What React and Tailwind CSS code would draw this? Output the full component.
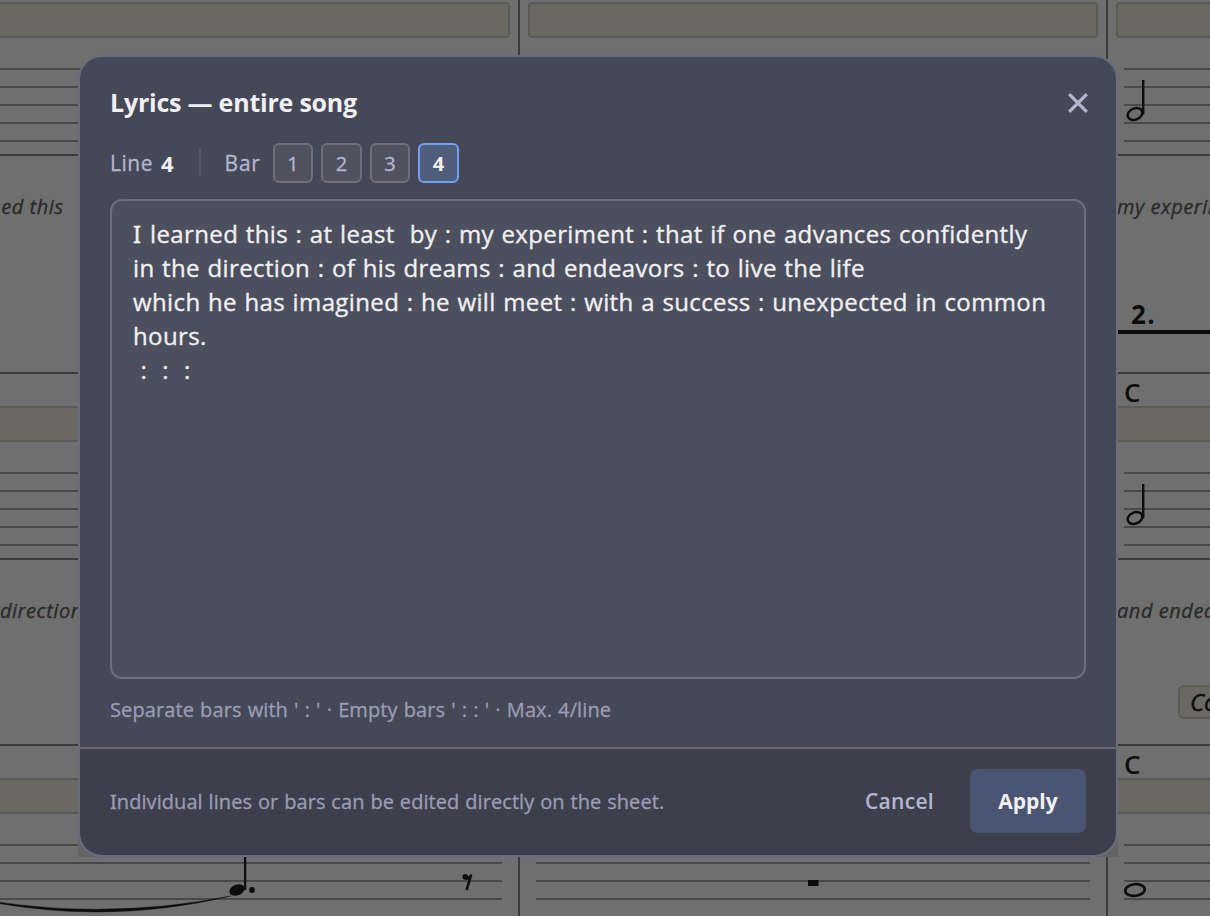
import { useState } from "react";

const systems = [
  {
    chord: "",
    lyrics: ["I learned this", "at least  by", "my experiment"],
    glyphs: [null, null, "half"],
  },
  {
    chord: "C",
    lyrics: ["in the direction", "of his dreams", "and endeavors"],
    glyphs: [null, null, "half"],
  },
  {
    chord: "C",
    lyrics: ["", "", ""],
    glyphs: ["dotted", "rest", "whole"],
  },
];

const song = [
  "I learned this : at least  by : my experiment : that if one advances confidently",
  "in the direction : of his dreams : and endeavors : to live the life",
  "which he has imagined : he will meet : with a success : unexpected in common",
  "hours.",
  " :  :  :",
];

// Note shapes, drawn from the top left corner of the staff
function Glyph({ type }) {
  return (
    <svg className="absolute left-0 top-0 w-full h-full overflow-visible" fill="#0d0d0d">
      {type === "half" && (
        <>
          <ellipse cx="11" cy="46" rx="7.6" ry="5.6" transform="rotate(-22 11 46)" fill="none" stroke="#0d0d0d" strokeWidth="2.5" />
          <rect x="18" y="12" width="2.4" height="34" />
        </>
      )}

      {type === "whole" && (
        <ellipse cx="11" cy="46" rx="9.8" ry="5.8" transform="rotate(-6 11 46)" fill="none" stroke="#0d0d0d" strokeWidth="2.6" />
      )}

      {type === "dotted" && (
        <>
          <ellipse cx="289" cy="46" rx="7.8" ry="5.4" transform="rotate(-22 289 46)" />
          <rect x="296" y="4" width="2.2" height="42" />
          <circle cx="304" cy="46" r="2.9" />
          <path d="M14 52 Q149 84 283 52 Q149 78.5 14 52Z" stroke="#0d0d0d" strokeWidth="0.4" />
        </>
      )}

      {type === "rest" && <rect x="272" y="36" width="10.5" height="6" />}

      {type === "dotted" && (
        <>
          <circle cx="517.2" cy="32.8" r="2.8" />
          <path d="M517.5 34.6 Q522 35 523.2 30.5 L518.6 46" fill="none" stroke="#0d0d0d" strokeWidth="2.6" />
        </>
      )}
    </svg>
  );
}

function Staff({ type }) {
  return (
    <div className="relative mx-4 mt-[30px] flex flex-col gap-4">
      {[1, 2, 3, 4, 5].map((n) => (
        <div key={n} className="h-0.5 bg-[#494949]"></div>
      ))}
      {type && <Glyph type={type} />}
    </div>
  );
}

function Sheet() {
  return (
    <div className="-ml-[70px] -mt-8 w-[1764px] text-[#0d0d0d]">
      {systems.map((system, row) => (
        <div key={row}>

          {/* BARS */}

          <div className="flex h-[188px] border-y-2 border-[#3c3c3c]">
            {system.glyphs.map((type, i) => (
              <div key={i} className="w-[588px] shrink-0 border-l-2 border-[#3c3c3c]">
                <div className="h-8 pl-4 text-[26px] leading-[36px] font-semibold">
                  {i === 2 ? system.chord : ""}
                </div>
                <div className="mx-2 h-9 rounded-[4px] border-2 border-[#5b5a55] bg-[#696863]"></div>
                <Staff type={type} />
              </div>
            ))}
          </div>

          {/* LYRICS + MARKS */}

          <div className={row === 0 ? "flex h-[216px]" : "flex h-[184px]"}>
            {system.lyrics.map((text, i) => (
              <div key={i} className="w-[588px] shrink-0">
                <div className="h-[102px] whitespace-nowrap pl-[11px] text-[20px] leading-[102px] italic tracking-[0.55px] text-[#2a2a2a] [-webkit-text-stroke:0.3px]">
                  {text}
                </div>
                {row === 0 && i === 2 && (
                  <div className="h-[76px] border-b-4 border-[#0d0d0d] pl-[25px] pt-[38px] text-[26px] leading-[36px] font-bold tracking-[1.5px]">
                    2.
                  </div>
                )}
                {row === 1 && i === 2 && (
                  <div className="ml-[72px] mt-[23px] flex h-[34px] w-[90px] items-center rounded-[6px] border-2 border-[#5b5a55] bg-[#696863] pl-[10px] text-[24px] italic [-webkit-text-stroke:0.4px]">
                    Coda
                  </div>
                )}
              </div>
            ))}
          </div>

        </div>
      ))}
    </div>
  );
}

export default function App() {

  const [bar, setBar] = useState(4);

  return (

    <div className="relative h-[916px] w-[1210px] overflow-hidden bg-[#6f6f6f] font-['Open_Sans',sans-serif]">

      <Sheet />

      {/* MODAL */}

      <div className="absolute left-[78px] top-[55px] h-[802px] w-[1040px] bg-[linear-gradient(transparent_692px,#646464_692px)] before:absolute before:inset-0 before:rounded-[24px] before:border-2 before:border-[#6a6c7b] before:bg-[#454857]">

        <div className="relative flex h-full flex-col">

          {/* HEADER */}

          <div className="flex items-center justify-between px-8 pt-[31px]">
            <h2 className="-mt-0.5 text-[25px] leading-[36px] font-bold tracking-[-0.22px] text-[#f0f0f2]">
              Lyrics — entire song
            </h2>
            <button className="-mr-[3px] text-[#b4b7d0]">
              <svg width="22" height="22" viewBox="0 0 22 22" stroke="currentColor" strokeWidth="3.2">
                <path d="M2.2 2.2L19.8 19.8M19.8 2.2L2.2 19.8" />
              </svg>
            </button>
          </div>

          {/* LINE / BAR */}

          <div className="mt-[23px] flex h-10 items-center px-8 text-[21px] text-[#b4b7d0]">
            <span className="pt-0.5 tracking-[0.5px] [-webkit-text-stroke:0.3px]">Line</span>
            <span className="ml-2 text-[22px] font-bold text-[#f0f0f2]">4</span>
            <span className="ml-[25px] h-7 w-0.5 bg-[#5a5c6d]"></span>
            <span className="ml-6 pt-0.5 tracking-[0.8px] [-webkit-text-stroke:0.3px]">Bar</span>
            <div className="ml-3 flex gap-2">
              {[1, 2, 3, 4].map((n) => (
                <button
                  key={n}
                  onClick={() => setBar(n)}
                  className={`h-10 w-[40.5px] rounded-[6px] border-2 pt-0.5 text-[20px] ${
                    bar === n
                      ? "border-[#739ff5] bg-[#505e7c] font-bold text-[#f0f0f2]"
                      : "border-[#6d6f7e] bg-[#4f515f] [-webkit-text-stroke:0.3px]"
                  }`}
                >
                  {n}
                </button>
              ))}
            </div>
          </div>

          {/* TEXT */}

          <div className="mx-8 mt-4 h-[480px] whitespace-pre rounded-[12px] border-2 border-[#6d6f7f] bg-[#4c4f5e] px-[21px] pt-4 text-[24px] leading-[34px] tracking-[0.38px] [word-spacing:0.9px] text-[#f0f0f2] [-webkit-text-stroke:0.35px]">
            {song.map((line, i) => (
              <p key={i}>
                {line.startsWith("I ") ? (
                  <><span className="mr-px font-['Noto_Sans'] leading-none">I</span>{line.slice(1)}</>
                ) : (
                  line
                )}
              </p>
            ))}
          </div>

          <p className="mx-8 mt-4 text-[20px] leading-[30px] tracking-[0.1px] [word-spacing:0.8px] text-[#9a9db4] [-webkit-text-stroke:0.3px]">
            Separate bars with ' : ' · Empty bars ' : : ' · Max. 4/line
          </p>

          {/* FOOTER */}

          <div className="mt-auto h-0.5 bg-[#666875]"></div>
          <div className="h-[108px] rounded-b-[24px] border-2 border-t-0 border-[#6a6c7b] bg-[#3e3f4c]">
            <div className="flex h-full items-center px-[30px] pb-0.5">
              <p className="pt-0.5 text-[20px] tracking-[0.07px] [word-spacing:0.6px] text-[#9a9db4] [-webkit-text-stroke:0.3px]">
                <span className="font-['Noto_Sans'] leading-none">I</span>ndividual lines or bars can be edited directly on the sheet.
              </p>
              <button className="ml-auto pt-0.5 text-[21px] font-semibold tracking-[0.3px] text-[#b4b7d0]">
                Cancel
              </button>
              <button className="ml-9 h-16 w-[116px] rounded-[8px] bg-[#4a5574] pt-0.5 text-[21px] font-bold text-[#f0f0f2]">
                Apply
              </button>
            </div>
          </div>

        </div>

      </div>

    </div>

  );
}
